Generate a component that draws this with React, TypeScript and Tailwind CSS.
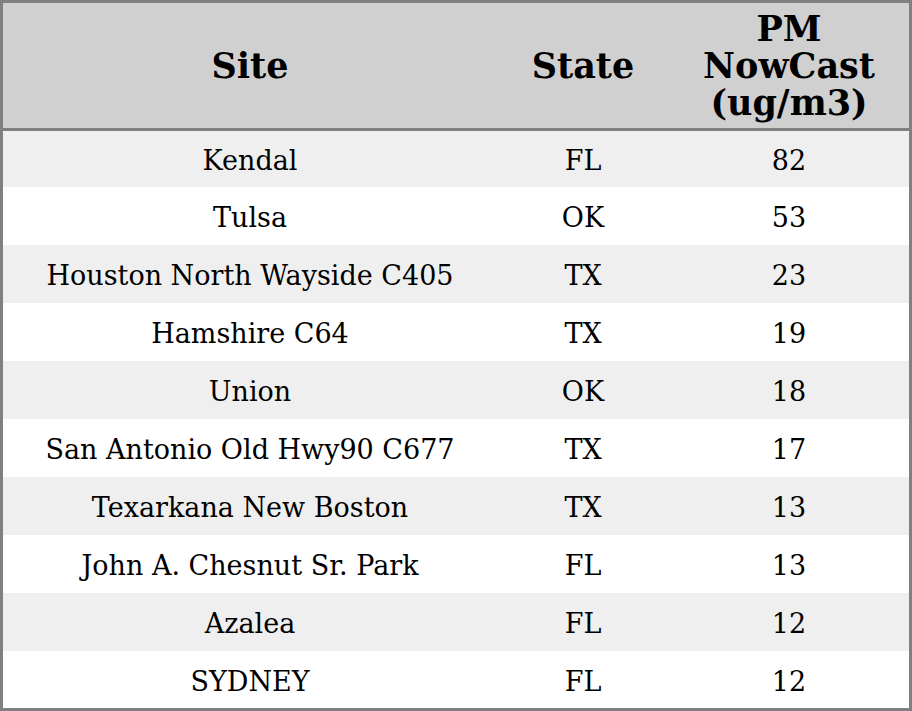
const rows: [string, string, string][] = [
  ["Kendal", "FL", "82"],
  ["Tulsa", "OK", "53"],
  ["Houston North Wayside C405", "TX", "23"],
  ["Hamshire C64", "TX", "19"],
  ["Union", "OK", "18"],
  ["San Antonio Old Hwy90 C677", "TX", "17"],
  ["Texarkana New Boston", "TX", "13"],
  ["John A. Chesnut Sr. Park", "FL", "13"],
  ["Azalea", "FL", "12"],
  ["SYDNEY", "FL", "12"],
];

const heights = ["h-[56px]", "h-[58px]", "h-[58px]", "h-[58px]", "h-[58px]", "h-[58px]", "h-[58px]", "h-[58px]", "h-[58px]", "h-[57px]"];

export default function App() {
  return (
    <div
      className="w-[912px] h-[711px] border-[3px] border-[#808080] bg-white text-black flex flex-col"
      style={{ fontFamily: '"DejaVu Serif", serif' }}
    >
      <div className="grid grid-cols-[494px_172px_240px] h-[128px] bg-[#d0d0d0] border-b-[3px] border-[#808080] font-bold text-[35px] leading-[37px]">
        <div className="flex items-center justify-center text-center">Site</div>
        <div className="flex items-center justify-center text-center">State</div>
        <div className="flex items-center justify-center text-center">
          PM
          <br />
          NowCast
          <br />
          (ug/m3)
        </div>
      </div>
      {rows.map((r, i) => (
        <div
          key={i}
          className={`grid grid-cols-[494px_172px_240px] items-center pt-[4px] text-[27px] leading-[32px] ${heights[i]} ${i % 2 === 0 ? "bg-[#efefef]" : "bg-white"}`}
        >
          <div className="text-center">{r[0]}</div>
          <div className="text-center">{r[1]}</div>
          <div className="text-center">{r[2]}</div>
        </div>
      ))}
    </div>
  );
}
